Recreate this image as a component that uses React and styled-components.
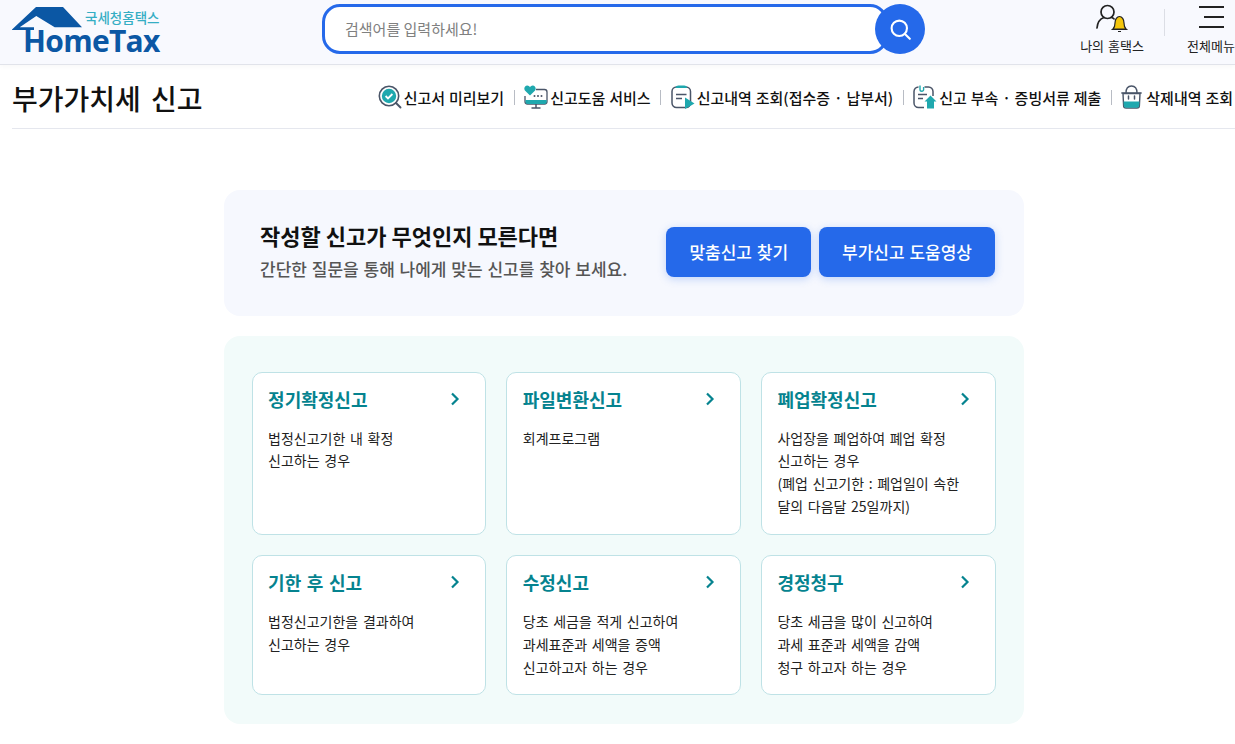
import React from "react";
import styled, { createGlobalStyle } from "styled-components";

const navItems = [
  { label: "신고서 미리보기", icon: "preview" },
  { label: "신고도움 서비스", icon: "monitor" },
  { label: "신고내역 조회(접수증 · 납부서)", icon: "history" },
  { label: "신고 부속 · 증빙서류 제출", icon: "upload" },
  { label: "삭제내역 조회", icon: "basket" },
];

const cards = [
  { title: "정기확정신고", lines: ["법정신고기한 내 확정", "신고하는 경우"] },
  { title: "파일변환신고", lines: ["회계프로그램"] },
  {
    title: "폐업확정신고",
    lines: ["사업장을 폐업하여 폐업 확정", "신고하는 경우", "(폐업 신고기한 : 폐업일이 속한", "달의 다음달 25일까지)"],
  },
  { title: "기한 후 신고", lines: ["법정신고기한을 결과하여", "신고하는 경우"] },
  { title: "수정신고", lines: ["당초 세금을 적게 신고하여", "과세표준과 세액을 증액", "신고하고자 하는 경우"] },
  { title: "경정청구", lines: ["당초 세금을 많이 신고하여", "과세 표준과 세액을 감액", "청구 하고자 하는 경우"] },
];

const NavIcon = ({ name }) => {
  if (name === "preview")
    return (
      <svg width="24" height="24" viewBox="0 0 24 24" fill="none">
        <circle cx="11" cy="11" r="9.7" stroke="#4a5568" strokeWidth="1.6" />
        <circle cx="11" cy="11" r="7.2" fill="#1fa8ae" />
        <path d="M7.6 11l2.4 2.4 4.4-4.4" stroke="#fff" strokeWidth="1.8" />
        <path d="M18 18l4.5 4.5" stroke="#4a5568" strokeWidth="1.9" strokeLinecap="round" />
      </svg>
    );
  if (name === "monitor")
    return (
      <svg width="24" height="24" viewBox="0 0 24 24" fill="none">
        <path d="M12 4.500h8.500a2.500 2.500 0 0 1 2.500 2.500v9.500a2.500 2.500 0 0 1-2.500 2.500h-17A2.500 2.500 0 0 1 1 16.500V11" stroke="#4a5568" strokeWidth="1.300" />
        <path d="M1.500 15h21.200v2a2 2 0 0 1-2 2H3.500a2 2 0 0 1-2-2z" fill="#1fa8ae" />
        <path d="M7.500 23h9M12 19v4" stroke="#4a5568" strokeWidth="1.500" />
        <path d="M6 10.500L.9 5.400C-.6 3.300 1 .4 3.300.5 4.500.6 5.400 1.300 6 2.200 6.600 1.300 7.500.6 8.700.5c2.300-.1 3.900 2.800 2.400 4.900z" fill="#1fa8ae" />
        <circle cx="10.500" cy="11" r="1" fill="#4a5568" />
        <circle cx="14" cy="11" r="1" fill="#4a5568" />
        <circle cx="17.500" cy="11" r="1" fill="#4a5568" />
      </svg>
    );
  if (name === "history")
    return (
      <svg width="24" height="24" viewBox="0 0 24 24" fill="none">
        <rect x="1" y="2" width="18.500" height="20.500" rx="4.500" stroke="#4a5568" strokeWidth="1.500" />
        <path d="M4.500 3c.4-1.800 1.500-2.500 2.800-2.500h6c1.300 0 2.400.7 2.800 2.500z" fill="#1fa8ae" />
        <path d="M5 9.500h10.500M5 13.500h6" stroke="#4a5568" strokeWidth="1.500" />
        <path d="M14 12.500l9.500 6-9.500 5.500z" fill="#1fa8ae" />
      </svg>
    );
  if (name === "upload")
    return (
      <svg width="24" height="24" viewBox="0 0 24 24" fill="none">
        <path d="M11.500 2h4a4.500 4.500 0 0 1 4.500 4.500V11M11 22.500H5.500A4.500 4.500 0 0 1 1 18V6.500A4.500 4.500 0 0 1 5.500 2" stroke="#4a5568" strokeWidth="1.500" />
        <path d="M7 .5v4a1.800 1.800 0 0 0 3.600 0V2" stroke="#1fa8ae" strokeWidth="1.400" />
        <path d="M5 9.500h9M5 13.500h5" stroke="#4a5568" strokeWidth="1.500" />
        <path d="M17.500 10.500l6 6H21v7h-7v-7h-2.500z" fill="#1fa8ae" />
      </svg>
    );
  return (
    <svg width="23" height="24" viewBox="0 0 23 24" fill="none">
      <path d="M2 8.500h17l-.6 12a2.500 2.500 0 0 1-2.500 2.500H5.100a2.500 2.500 0 0 1-2.500-2.500z" stroke="#4a5568" strokeWidth="1.400" />
      <path d="M2.500 16.500h16l-.3 4.300a2 2 0 0 1-2 1.900H4.800a2 2 0 0 1-2-1.900z" fill="#1fa8ae" />
      <path d="M.8 8h19.400M5 8c0-4 1.500-7 5.500-7s5.500 3 5.500 7" stroke="#4a5568" strokeWidth="1.400" strokeLinecap="round" />
      <path d="M7.500 11v3M13.500 11v3" stroke="#4a5568" strokeWidth="1.500" strokeLinecap="round" />
    </svg>
  );
};

const App = () => {
  return (
    <Page>
      <GlobalStyle />
      <Header>
        <Logo>
          <Roof width="71" height="24" viewBox="0 0 71 24">
            <path d="M0 22.500L24 0h27l19 20.300H42.700L24.300 9 7.700 20.300H22V23H0z" fill="#0b57a4" />
          </Roof>
          <LogoSub>국세청홈택스</LogoSub>
          <LogoMain>HomeTax</LogoMain>
        </Logo>
        <SearchArea>
          <SearchBox>
            <SearchInput placeholder="검색어를 입력하세요!" />
          </SearchBox>
          <SearchButton aria-label="검색">
            <svg width="21" height="21" viewBox="0 0 26 26" fill="none" stroke="#fff" strokeWidth="2.600">
              <circle cx="11.500" cy="11.500" r="9.500" />
              <path d="M18.500 18.500l6 6" strokeLinecap="round" />
            </svg>
          </SearchButton>
        </SearchArea>
        <HeaderTools>
          <ToolMy>
            <svg width="34" height="30" viewBox="0 0 34 30" fill="none">
              <circle cx="12.500" cy="9" r="6.500" stroke="#222" strokeWidth="1.700" />
              <path d="M2 25c.5-6 4-9.500 7-10.500M16.500 14.500c1 .3 1.800.8 2.500 1.400" stroke="#222" strokeWidth="1.700" strokeLinecap="round" />
              <path d="M18 26c1.500-1.500 2-2.500 2-6s2-6.500 4.500-6.500S29 16.500 29 20s.500 4.500 2 6z" fill="#f4c60c" stroke="#222" strokeWidth="1.200" />
              <path d="M16.500 26.500h16M23 28.500h3" stroke="#222" strokeWidth="1.200" />
            </svg>
            <ToolLabel>나의 홈택스</ToolLabel>
          </ToolMy>
          <ToolDivider />
          <ToolMenu>
            <svg width="25" height="22" viewBox="0 0 25 22" fill="none" stroke="#222" strokeWidth="1.800">
              <path d="M0 1h25M5 11h20M0 21h25" />
            </svg>
            <ToolLabel>전체메뉴</ToolLabel>
          </ToolMenu>
        </HeaderTools>
      </Header>
      <TitleBar>
        <PageTitle>부가가치세 신고</PageTitle>
        <QuickNav>
          {navItems.map((item, i) => (
            <React.Fragment key={item.label}>
              {i > 0 && <NavDivider />}
              <NavLink>
                <NavIcon name={item.icon} />
                <span>{item.label}</span>
              </NavLink>
            </React.Fragment>
          ))}
        </QuickNav>
      </TitleBar>
      <Main>
        <Banner>
          <BannerText>
            <BannerTitle>작성할 신고가 무엇인지 모른다면</BannerTitle>
            <BannerDesc>간단한 질문을 통해 나에게 맞는 신고를 찾아 보세요.</BannerDesc>
          </BannerText>
          <BannerButtons>
            <PrimaryButton>맞춤신고 찾기</PrimaryButton>
            <PrimaryButton>부가신고 도움영상</PrimaryButton>
          </BannerButtons>
        </Banner>
        <CardPanel>
          {cards.map((card) => (
            <Card key={card.title}>
              <CardHead>
                <CardTitle>{card.title}</CardTitle>
                <svg width="10" height="14" viewBox="0 0 10 14" fill="none" stroke="#05838f" strokeWidth="2.200">
                  <path d="M2 1.500L7.500 7 2 12.500" />
                </svg>
              </CardHead>
              <CardBody>
                {card.lines.map((line) => (
                  <div key={line}>{line}</div>
                ))}
              </CardBody>
            </Card>
          ))}
        </CardPanel>
      </Main>
    </Page>
  );
};

export default App;

const GlobalStyle = createGlobalStyle`
  html, body {
    margin: 0;
    padding: 0;
    background: #fff;
    overflow-x: hidden;
  }
  * {
    box-sizing: border-box;
  }
  body {
    font-family: "Noto Sans CJK KR", "Noto Sans", sans-serif;
  }
`;

const Page = styled.div`
  width: 1235px;
  height: 744px;
  overflow: hidden;
`;

const Header = styled.header`
  height: 65px;
  background: #f8f9fe;
  border-bottom: 1px solid #e1e3ea;
  box-shadow: 0 2px 5px rgba(0, 0, 0, 0.03);
  display: flex;
  align-items: flex-start;
  padding-left: 12px;
  position: relative;
`;

const Logo = styled.div`
  width: 150px;
  height: 54px;
  position: relative;
  flex-shrink: 0;
  margin-top: 7px;
`;

const Roof = styled.svg`
  position: absolute;
  left: 0;
  top: 0;
`;

const LogoSub = styled.div`
  position: absolute;
  left: 73px;
  top: 0;
  font-size: 13.500px;
  line-height: 20px;
  font-weight: 500;
  color: #35aec4;
  white-space: nowrap;
`;

const LogoMain = styled.div`
  position: absolute;
  left: 11px;
  top: 21px;
  font-family: "Open Sans", sans-serif;
  font-weight: 700;
  font-size: 30px;
  line-height: 26px;
  letter-spacing: -0.7px;
  color: #0b57a4;
  white-space: nowrap;
`;

const SearchArea = styled.div`
  display: flex;
  align-items: center;
  margin: 4px 0 0 160px;
`;

const SearchBox = styled.div`
  width: 566px;
  height: 50px;
  background: #fff;
  border: 3px solid #2569ea;
  border-radius: 18px;
  display: flex;
  align-items: center;
  padding: 0 0 2px 18px;
`;

const SearchInput = styled.input`
  border: none;
  outline: none;
  background: none;
  width: 100%;
  font-family: inherit;
  font-size: 15px;
  color: #222;
  &::placeholder {
    color: #808080;
    opacity: 1;
  }
`;

const SearchButton = styled.button`
  width: 50px;
  height: 50px;
  border: none;
  border-radius: 50%;
  background: #2569ea;
  margin-left: -13px;
  padding: 0;
  display: flex;
  align-items: center;
  justify-content: center;
  position: relative;
`;

const HeaderTools = styled.div`
  display: flex;
  margin-left: 153px;
  padding-top: 3px;
  flex-shrink: 0;
`;

const ToolMy = styled.div`
  width: 66px;
  display: flex;
  flex-direction: column;
  align-items: center;
  gap: 4px;
  white-space: nowrap;
  padding-left: 2px;
`;

const ToolMenu = styled.div`
  width: 50px;
  margin-left: 21px;
  display: flex;
  flex-direction: column;
  align-items: center;
  gap: 9px;
  padding-top: 3px;
  white-space: nowrap;
`;

const ToolLabel = styled.div`
  font-size: 13px;
  line-height: 18px;
  word-spacing: 1px;
  color: #222;
`;

const ToolDivider = styled.div`
  width: 1px;
  height: 27px;
  background: #dcdee5;
  margin: 6px 0 0 20px;
`;

const TitleBar = styled.div`
  height: 64px;
  margin-left: 12px;
  border-bottom: 1px solid #e5e7ee;
  display: flex;
  align-items: center;
  justify-content: space-between;
  padding: 1px 2px 0 0;
`;

const PageTitle = styled.h1`
  margin: 2px 0 0;
  font-size: 28px;
  line-height: 40px;
  font-weight: 500;
  word-spacing: 4px;
  color: #111;
  white-space: nowrap;
`;

const QuickNav = styled.nav`
  display: flex;
  align-items: center;
  gap: 9.500px;
`;

const NavLink = styled.div`
  display: flex;
  align-items: center;
  gap: 2px;
  font-size: 15px;
  font-weight: 500;
  word-spacing: 0.5px;
  color: #111;
  white-space: nowrap;
`;

const NavDivider = styled.div`
  width: 1px;
  height: 15px;
  background: #b8bcc4;
`;

const Main = styled.main`
  width: 800px;
  margin: 61px 0 0 224px;
  display: flex;
  flex-direction: column;
  gap: 20px;
`;

const Banner = styled.section`
  height: 126px;
  background: #f6f8fe;
  border-radius: 16px;
  display: flex;
  align-items: center;
  justify-content: space-between;
  padding: 0 29px 2px 36px;
`;

const BannerText = styled.div`
  display: flex;
  flex-direction: column;
  gap: 6px;
  padding-bottom: 5px;
`;

const BannerTitle = styled.div`
  font-size: 22px;
  line-height: 32px;
  font-weight: 700;
  color: #111;
`;

const BannerDesc = styled.div`
  font-size: 17px;
  line-height: 24px;
  font-weight: 500;
  word-spacing: 1px;
  color: #555;
`;

const BannerButtons = styled.div`
  display: flex;
  gap: 8px;
`;

const PrimaryButton = styled.button`
  height: 50px;
  padding: 0 23px 2px;
  border: none;
  border-radius: 8px;
  background: #2569ea;
  box-shadow: 0 2px 8px rgba(37, 105, 234, 0.25);
  color: #fff;
  font-family: inherit;
  font-size: 17px;
  font-weight: 500;
  word-spacing: 1px;
  white-space: nowrap;
`;

const CardPanel = styled.section`
  height: 388px;
  background: #f2fbfa;
  border-radius: 16px;
  padding: 35.600px 0 0 27.600px;
  display: grid;
  grid-template-columns: repeat(3, 234.670px);
  grid-template-rows: 163.400px 140px;
  column-gap: 20px;
  row-gap: 20px;
`;

const Card = styled.article`
  background: #fff;
  border: 1px solid #bfe2e6;
  border-radius: 10px;
  padding: 11px 25px 0 15.500px;
`;

const CardHead = styled.div`
  display: flex;
  align-items: center;
  justify-content: space-between;
  margin-bottom: 13px;
  svg {
    margin-top: 0;
  }
`;

const CardTitle = styled.h3`
  margin: 0;
  font-size: 18px;
  line-height: 30px;
  font-weight: 700;
  word-spacing: 1.500px;
  color: #05838f;
`;

const CardBody = styled.div`
  font-size: 14px;
  line-height: 22.800px;
  word-spacing: 1.500px;
  color: #222;
`;
